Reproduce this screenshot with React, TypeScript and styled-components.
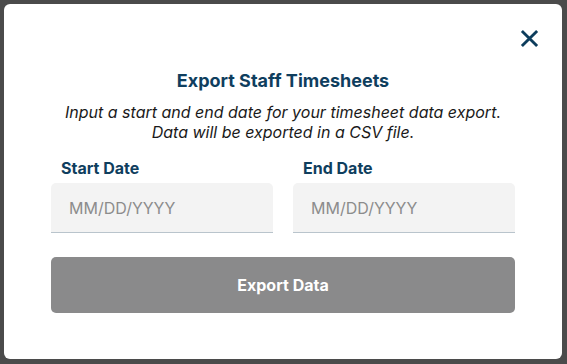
import { FC } from 'react'
import styled, { createGlobalStyle } from 'styled-components'

const GlobalStyle = createGlobalStyle`
  html, body {
    margin: 0;
    padding: 0;
    background: #4b4b4b;
  }
  body {
    font-family: 'Inter', 'Lato', sans-serif;
  }
`

const Backdrop = styled.div`
  width: 567px;
  height: 364px;
  padding: 4px 5px 5px 4px;
  box-sizing: border-box;
  background: #4b4b4b;
`

const Modal = styled.div`
  height: 100%;
  background: #ffffff;
  border-radius: 6px;
  padding: 22px 47px 0 47px;
  box-sizing: border-box;
  display: flex;
  flex-direction: column;
`

const Header = styled.div`
  display: flex;
  justify-content: flex-end;
  margin-right: -24px;
  height: 24px;
`

const CloseButton = styled.button`
  background: none;
  border: none;
  padding: 0;
  width: 20px;
  height: 24px;
  cursor: pointer;
  color: #0d3d5c;
  display: flex;
  align-items: center;
  justify-content: center;
`

const Title = styled.h2`
  margin: 19px 0 0;
  text-align: center;
  font-size: 18px;
  font-weight: 700;
  color: #0f3e5e;
  line-height: 24px;
`

const Subtitle = styled.p`
  margin: 9px 0 0;
  text-align: center;
  font-size: 16px;
  font-style: italic;
  color: #1a1a1a;
  line-height: 20px;
`

const Fields = styled.div`
  display: grid;
  grid-template-columns: 1fr 1fr;
  gap: 20px;
  margin-top: 16px;
`

const Field = styled.label`
  display: flex;
  flex-direction: column;
  gap: 5px;
  min-width: 0;
`

const Label = styled.span`
  font-size: 16px;
  font-weight: 700;
  color: #0f3e5e;
  padding-left: 10px;
  line-height: 20px;
`

const DateInput = styled.input`
  width: 100%;
  min-width: 0;
  height: 50px;
  box-sizing: border-box;
  border: none;
  border-bottom: 1.5px solid #b9c4cc;
  border-radius: 5px 5px 0 0;
  background: #f3f3f3;
  padding: 0 18px;
  font-family: inherit;
  font-size: 16px;
  color: #333;
  outline: none;

  &::placeholder {
    color: #8c8c8c;
  }
`

const ExportButton = styled.button`
  margin-top: 24px;
  height: 56px;
  border: none;
  border-radius: 5px;
  background: #8a8a8b;
  color: #ffffff;
  font-family: inherit;
  font-size: 16px;
  font-weight: 700;
  cursor: pointer;
`

const App: FC = () => {
  return (
    <>
      <GlobalStyle />
      <Backdrop>
        <Modal>
          <Header>
            <CloseButton aria-label="Close">
              <svg width="19" height="19" viewBox="0 0 20 20" fill="none">
                <path d="M2 2L18 18M18 2L2 18" stroke="currentColor" strokeWidth="3" />
              </svg>
            </CloseButton>
          </Header>
          <Title>Export Staff Timesheets</Title>
          <Subtitle>
            Input a start and end date for your timesheet data export.
            <br />
            Data will be exported in a CSV file.
          </Subtitle>
          <Fields>
            <Field>
              <Label>Start Date</Label>
              <DateInput placeholder="MM/DD/YYYY" />
            </Field>
            <Field>
              <Label>End Date</Label>
              <DateInput placeholder="MM/DD/YYYY" />
            </Field>
          </Fields>
          <ExportButton>Export Data</ExportButton>
        </Modal>
      </Backdrop>
    </>
  )
}

export default App
